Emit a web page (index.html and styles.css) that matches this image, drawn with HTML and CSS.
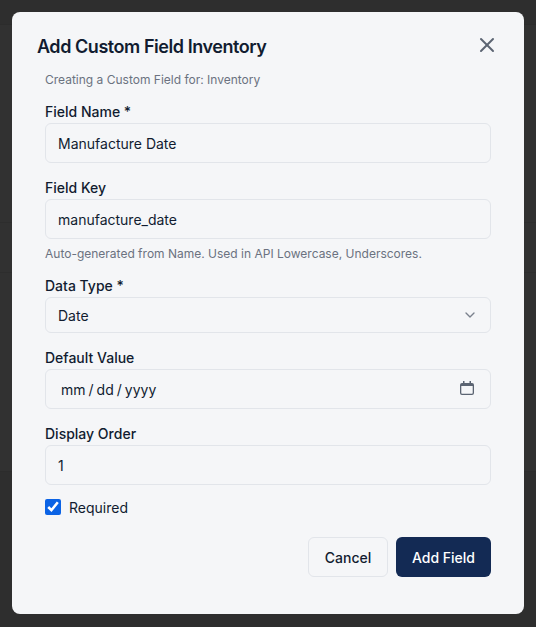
FILE: index.html
```html
<!DOCTYPE html>
<html lang="en">
<head>
	<meta charset="UTF-8">
	<title>Add Custom Field</title>
	<link rel="stylesheet" href="styles.css">
</head>
<body>
	<div class="backdrop">
		<form class="modal">
			<div class="modal-head">
				<h2 class="modal-title">Add Custom Field Inventory</h2>
				<button type="button" class="close-btn" aria-label="Close">
					<svg width="24" height="24" viewBox="0 0 24 24" fill="none" stroke="#5b6472" stroke-width="2" stroke-linecap="round" stroke-linejoin="round"><path d="M18 6 6 18"/><path d="m6 6 12 12"/></svg>
				</button>
			</div>
			<div class="modal-body">
				<p class="subtitle">Creating a Custom Field for: Inventory</p>

				<div class="field">
					<label class="field-label" for="name">Field Name *</label>
					<input class="input" id="name" type="text" value="Manufacture Date">
				</div>

				<div class="field field-key">
					<label class="field-label" for="key">Field Key</label>
					<input class="input" id="key" type="text" value="manufacture_date">
					<p class="hint">Auto-generated from Name. Used in API Lowercase, Underscores.</p>
				</div>

				<div class="field">
					<label class="field-label" for="type">Data Type *</label>
					<div class="control-wrap">
						<select class="input select" id="type">
							<option>Date</option>
						</select>
						<svg class="chevron" width="16" height="16" viewBox="0 0 24 24" fill="none" stroke="#7a818d" stroke-width="2" stroke-linecap="round" stroke-linejoin="round"><path d="m6 9 6 6 6-6"/></svg>
					</div>
				</div>

				<div class="field">
					<label class="field-label" for="default">Default Value</label>
					<div class="control-wrap">
						<input class="input date" id="default" type="date">
						<svg class="calendar" width="14" height="14" viewBox="0 0 14 14">
							<path fill="#5b6472" d="M3 0h1.500v2H3zM9.500 0H11v2H9.500z"/>
							<path fill="#5b6472" d="M2 2h10a2 2 0 0 1 2 2v8a2 2 0 0 1-2 2H2a2 2 0 0 1-2-2V4a2 2 0 0 1 2-2zm-.7 3v7c0 .4.300.7.700.7h10c.4 0 .7-.3.7-.7V5z"/>
						</svg>
					</div>
				</div>

				<div class="field field-order">
					<label class="field-label" for="order">Display Order</label>
					<input class="input" id="order" type="text" value="1">
				</div>

				<label class="check-row">
					<input class="check" type="checkbox" checked>
					<span>Required</span>
				</label>

				<div class="actions">
					<button type="button" class="btn btn-cancel">Cancel</button>
					<button type="button" class="btn btn-primary">Add Field</button>
				</div>
			</div>
		</form>
	</div>
</body>
</html>
```

FILE: styles.css
```css
* {
	margin: 0;
	padding: 0;
	box-sizing: border-box;
}

body {
	font-family: Inter, "Liberation Sans", sans-serif;
	color: #111c30;
	background-color: #2e2e2e;
}

/* 蒙版下面隐约可见的页面 */
.backdrop {
	width: 536px;
	height: 627px;
	padding: 12px 12px 13px;
	background: linear-gradient(to bottom,
		#2e2e2e 0, #2e2e2e 24px,
		#2c2c2c 24px, #2c2c2c 25px,
		#313131 25px, #313131 222px,
		#2d2d2d 222px, #2d2d2d 223px,
		#313131 223px, #313131 272px,
		#2d2d2d 272px, #2d2d2d 273px,
		#313131 273px, #313131 471px,
		#2c2c2c 471px, #2c2c2c 472px,
		#2e2e2e 472px);
}

.modal {
	height: 602px;
	background-color: #f5f6f8;
	border-radius: 8px;
}

.modal-head {
	display: flex;
	justify-content: space-between;
	align-items: center;
	padding: 21px 25px 0;
}

.modal-title {
	font-size: 18px;
	line-height: 28px;
	font-weight: 600;
	letter-spacing: -0.45px;
}

.close-btn {
	display: flex;
	border: none;
	background: none;
	margin-top: -4px;
}

.modal-body {
	padding: 9px 33px 0;
}

.subtitle {
	font-size: 12px;
	line-height: 20px;
	color: #6b7280;
	margin-bottom: 12px;
}

/* 表单项 */
.field {
	margin-bottom: 15px;
}

.field-key {
	margin-bottom: 12px;
}

.field-order {
	margin-bottom: 13px;
}

.field-label {
	display: block;
	font-size: 14px;
	line-height: 20px;
	font-weight: 500;
	margin-bottom: 1px;
}

.input {
	display: block;
	width: 100%;
	height: 40px;
	padding: 0 12px;
	border: 1px solid #e2e5ea;
	border-radius: 6px;
	background-color: #f5f6f8;
	font-family: inherit;
	font-size: 14px;
	color: #111c30;
	outline: none;
}

.hint {
	margin-top: 5px;
	font-size: 12px;
	line-height: 20px;
	color: #6b7280;
}

.control-wrap {
	position: relative;
}

.select {
	height: 36px;
	appearance: none;
}

.chevron {
	position: absolute;
	top: 10px;
	right: 13px;
}

.date::-webkit-datetime-edit {
	padding-left: 2px;
}

.date::-webkit-datetime-edit-text {
	padding: 0 2px;
}

.date::-webkit-calendar-picker-indicator {
	opacity: 0;
}

.calendar {
	position: absolute;
	top: 12px;
	right: 17px;
	pointer-events: none;
}

.check-row {
	display: flex;
	align-items: center;
	gap: 8px;
	font-size: 14px;
	line-height: 20px;
}

.check {
	width: 16px;
	height: 16px;
	margin-top: -2px;
	accent-color: #0b63e5;
}

.actions {
	display: flex;
	justify-content: flex-end;
	gap: 8px;
	margin-top: 19px;
}

.btn {
	height: 40px;
	border-radius: 6px;
	font-family: inherit;
	font-size: 14px;
	font-weight: 500;
}

.btn-cancel {
	width: 80px;
	border: 1px solid #e2e5ea;
	background-color: #f5f6f8;
	color: #111c30;
}

.btn-primary {
	width: 95px;
	border: none;
	background-color: #132a54;
	color: #fff;
}
```
